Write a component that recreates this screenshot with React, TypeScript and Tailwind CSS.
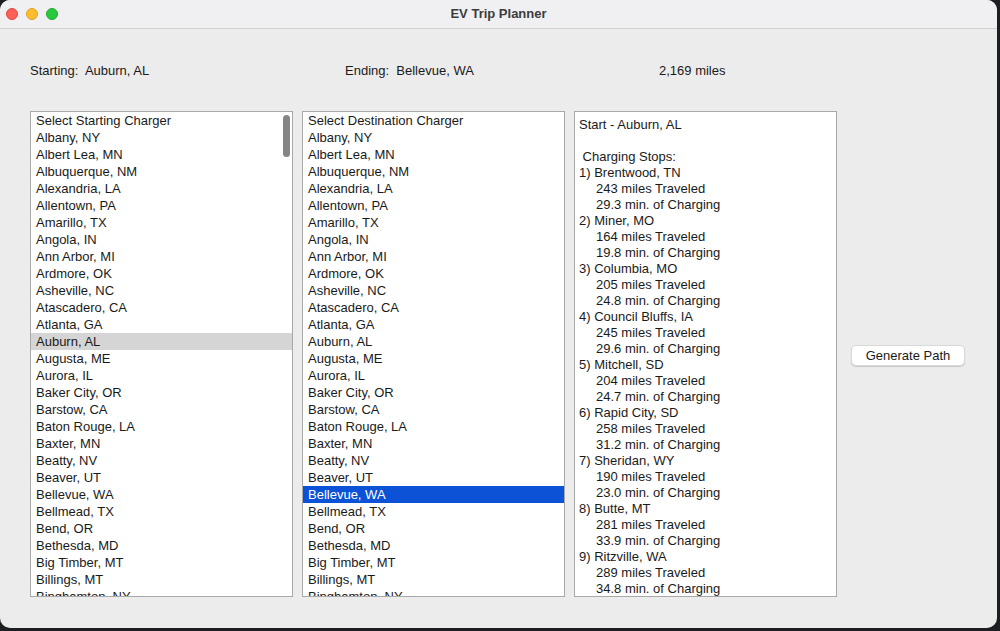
const startList = [
  'Select Starting Charger',
  'Albany, NY',
  'Albert Lea, MN',
  'Albuquerque, NM',
  'Alexandria, LA',
  'Allentown, PA',
  'Amarillo, TX',
  'Angola, IN',
  'Ann Arbor, MI',
  'Ardmore, OK',
  'Asheville, NC',
  'Atascadero, CA',
  'Atlanta, GA',
  'Auburn, AL',
  'Augusta, ME',
  'Aurora, IL',
  'Baker City, OR',
  'Barstow, CA',
  'Baton Rouge, LA',
  'Baxter, MN',
  'Beatty, NV',
  'Beaver, UT',
  'Bellevue, WA',
  'Bellmead, TX',
  'Bend, OR',
  'Bethesda, MD',
  'Big Timber, MT',
  'Billings, MT',
  'Binghamton, NY',
];

const destList = ['Select Destination Charger', ...startList.slice(1)];

const stops = [
  ['Brentwood, TN', '243', '29.3'],
  ['Miner, MO', '164', '19.8'],
  ['Columbia, MO', '205', '24.8'],
  ['Council Bluffs, IA', '245', '29.6'],
  ['Mitchell, SD', '204', '24.7'],
  ['Rapid City, SD', '258', '31.2'],
  ['Sheridan, WY', '190', '23.0'],
  ['Butte, MT', '281', '33.9'],
  ['Ritzville, WA', '289', '34.8'],
];

function ListBox({ items, selected, active, scrollbar }: { items: string[]; selected: number; active?: boolean; scrollbar?: boolean }) {
  return (
    <div className="relative w-[263px] h-[486px] bg-white border border-[#a9a9a9] overflow-hidden">
      {items.map((it, i) => (
        <div
          key={it}
          className={`h-[17px] leading-[17px] pl-[5px] whitespace-nowrap ${
            i === selected ? (active ? 'bg-[#0b52d6] text-white' : 'bg-[#d5d5d5] text-[#1a1a1a]') : 'text-[#1a1a1a]'
          }`}
        >
          {it}
        </div>
      ))}
      {scrollbar && (
        <div className="absolute top-[3px] right-[2px] w-[7px] h-[42px] rounded-full bg-[#858585]" />
      )}
    </div>
  );
}

export default function App() {
  return (
    <div className="w-[1000px] h-[631px] bg-[#1c1e22] overflow-hidden" style={{ fontFamily: '"Liberation Sans", Arial, sans-serif' }}>
      <div className="w-[997px] h-[628px] rounded-[10px] overflow-hidden bg-[#ececec] flex flex-col text-[13px]">
        {/* title bar */}
        <div className="h-[29px] shrink-0 bg-[#f0f0f2] border-b border-[#d2d2d2] flex items-center relative">
          <div className="flex gap-[8px] pl-[6px]">
            <span className="w-[12px] h-[12px] rounded-full bg-[#fe5f57] border border-[#e0443e]" />
            <span className="w-[12px] h-[12px] rounded-full bg-[#febc2e] border border-[#dea123]" />
            <span className="w-[12px] h-[12px] rounded-full bg-[#28c840] border border-[#1aab29]" />
          </div>
          <div className="flex-1 text-center font-bold text-[#3c3c3c] pr-[58px]">EV Trip Planner</div>
        </div>

        {/* body */}
        <div className="flex flex-col pl-[30px]">
          <div className="flex h-[17px] leading-[17px] mt-[33px] text-[#1a1a1a]">
            <div className="w-[315px] whitespace-pre">Starting:  Auburn, AL</div>
            <div className="w-[314px] whitespace-pre">Ending:  Bellevue, WA</div>
            <div>2,169 miles</div>
          </div>

          <div className="flex items-start mt-[32px]">
            <ListBox items={startList} selected={13} scrollbar />
            <div className="w-[9px]" />
            <ListBox items={destList} selected={22} active />
            <div className="w-[9px]" />
            <div className="w-[263px] h-[486px] bg-white border border-[#a9a9a9] overflow-hidden pl-[4px] pt-[5px] text-[#1a1a1a] leading-[16px] whitespace-pre">
              <div>Start - Auburn, AL</div>
              <div>&nbsp;</div>
              <div> Charging Stops:</div>
              {stops.map(([city, mi, min], i) => (
                <div key={city}>
                  <div>{i + 1}) {city}</div>
                  <div className="pl-[17px]">{mi} miles Traveled</div>
                  <div className="pl-[17px]">{min} min. of Charging</div>
                </div>
              ))}
            </div>
            <button className="ml-[14px] mt-[234px] w-[114px] h-[21px] bg-white rounded-[5px] border border-[#d8d8d8] shadow-[0_1px_1px_rgba(0,0,0,0.15)] text-[#1a1a1a] text-[13px] leading-[19px]">
              Generate Path
            </button>
          </div>
        </div>
      </div>
    </div>
  );
}
